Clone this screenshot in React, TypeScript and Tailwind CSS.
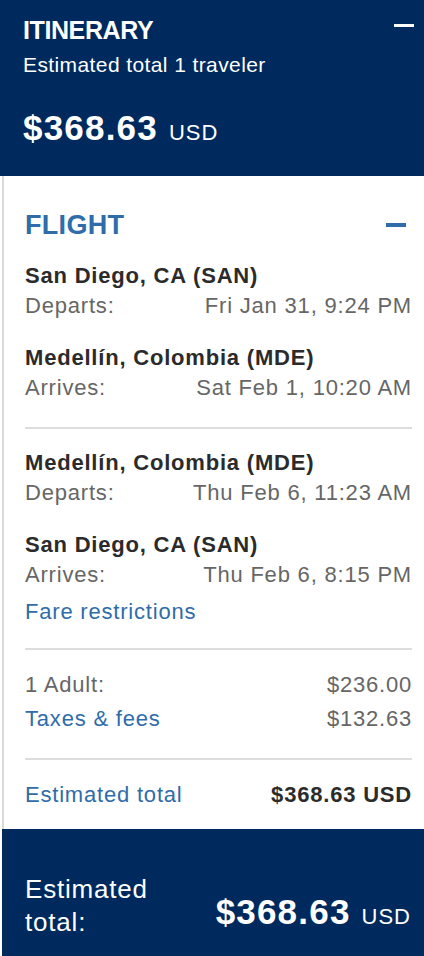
import React from 'react';

const navy = 'bg-[#002a5e]';

function Row({ label, value, labelClass, valueClass, className = '' }: {
  label: string;
  value: string;
  labelClass?: string;
  valueClass?: string;
  className?: string;
}) {
  return (
    <div className={`flex justify-between leading-[30px] ${className}`}>
      <span className={labelClass ?? 'text-[#666666]'}>{label}</span>
      <span className={valueClass ?? 'text-[#666666]'}>{value}</span>
    </div>
  );
}

function Segment({ from, fromLabel, fromTime, to, toLabel, toTime }: {
  from: string;
  fromLabel: string;
  fromTime: string;
  to: string;
  toLabel: string;
  toTime: string;
}) {
  return (
    <div>
      <div className="font-bold text-[#2b2b2b] leading-[30px]">{from}</div>
      <Row label={fromLabel} value={fromTime} />
      <div className="mt-[22px] font-bold text-[#2b2b2b] leading-[30px]">{to}</div>
      <Row label={toLabel} value={toTime} />
    </div>
  );
}

export default function App() {
  return (
    <div className="w-[424px] min-h-[956px] bg-white font-['Liberation_Sans',Arial,sans-serif] antialiased">
      {/* summary header */}
      <div className={`${navy} h-[176px] pl-[23px] pr-[10px] pt-[16px] text-white`}>
        <div className="flex justify-between">
          <h1 className="text-[25px] leading-[28px] font-bold tracking-[-0.4px]">ITINERARY</h1>
          <span className="mt-[8px] block h-[3px] w-[20px] bg-white" />
        </div>
        <p className="mt-[9px] text-[21px] leading-[24px] tracking-[0.4px]">Estimated total 1 traveler</p>
        <p className="mt-[31px] leading-[40px]">
          <span className="text-[35px] font-bold tracking-[1.2px]">$368.63</span>
          <span className="ml-[11px] text-[22px] tracking-[1px]">USD</span>
        </p>
      </div>

      {/* flight details */}
      <div className="ml-[2px] border-l-2 border-[#d9d9d9] pl-[21px] pr-[12px] pt-[33px] pb-[19px] text-[22px] tracking-[0.8px]">
        <div className="flex items-center justify-between">
          <h2 className="text-[27px] leading-[32px] font-bold tracking-[0.3px] text-[#2f6caa]">FLIGHT</h2>
          <span className="mr-[6px] block h-[4px] w-[20px] bg-[#2f6caa]" />
        </div>

        <div className="mt-[20px]">
          <Segment
            from="San Diego, CA (SAN)"
            fromLabel="Departs:"
            fromTime="Fri Jan 31, 9:24 PM"
            to="Medellín, Colombia (MDE)"
            toLabel="Arrives:"
            toTime="Sat Feb 1, 10:20 AM"
          />
        </div>

        <div className="mt-[24px] h-[2px] bg-[#dddddd]" />

        <div className="mt-[19px]">
          <Segment
            from="Medellín, Colombia (MDE)"
            fromLabel="Departs:"
            fromTime="Thu Feb 6, 11:23 AM"
            to="San Diego, CA (SAN)"
            toLabel="Arrives:"
            toTime="Thu Feb 6, 8:15 PM"
          />
        </div>
        <a className="mt-[7px] block leading-[30px] text-[#2f6caa]">Fare restrictions</a>

        <div className="mt-[21px] h-[2px] bg-[#dddddd]" />

        <Row className="mt-[20px]" label="1 Adult:" value="$236.00" />
        <Row
          className="mt-[4px]"
          label="Taxes & fees"
          value="$132.63"
          labelClass="text-[#2f6caa]"
        />

        <div className="mt-[24px] h-[2px] bg-[#dddddd]" />

        <Row
          className="mt-[20px]"
          label="Estimated total"
          value="$368.63 USD"
          labelClass="text-[#2f6caa]"
          valueClass="font-bold text-[#2b2b2b]"
        />
      </div>

      {/* sticky total */}
      <div className={`${navy} ml-[2px] flex h-[127px] items-end justify-between pl-[23px] pr-[13px] pb-[17px] text-white`}>
        <p className="text-[26px] leading-[33px] tracking-[0.8px]">
          Estimated
          <br />
          total:
        </p>
        <p className="leading-[40px]">
          <span className="text-[35px] font-bold tracking-[1.2px]">$368.63</span>
          <span className="ml-[11px] text-[22px] tracking-[1px]">USD</span>
        </p>
      </div>
    </div>
  );
}
